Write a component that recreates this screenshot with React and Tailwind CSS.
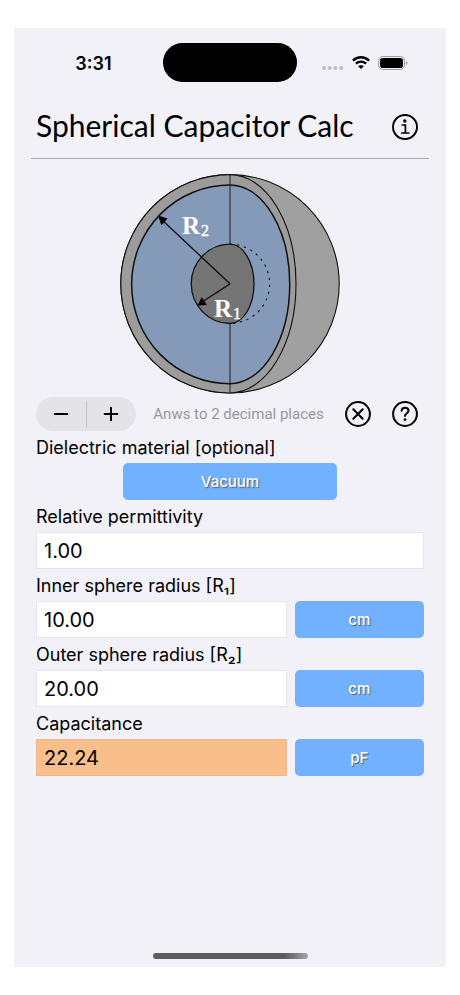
import { useState } from "react";

function StatusBar() {
  return (
    <div className="grid grid-cols-[1fr_134px_1fr] items-center pt-[15px]">
      <span className="pt-0.5 pl-2.5 text-center text-lg font-semibold leading-6">3:31</span>
      <div className="h-[39px] rounded-full bg-black" />
      <div className="flex items-center justify-center gap-2 pr-3.5">
        <svg className="mt-2.5 h-1 w-[22px]" viewBox="0 0 22 4" fill="#bfbec4">
          <circle cx="2" cy="2" r="2" />
          <circle cx="7.7" cy="2" r="2" />
          <circle cx="13.4" cy="2" r="2" />
          <circle cx="19.2" cy="2" r="2" />
        </svg>
        <svg className="h-[13px] w-[18px]" viewBox="0 0 18 13" fill="none" stroke="#000" strokeWidth="2.3">
          <path d="M0.9 4.6C5.4 0.1 12.6 0.1 17.1 4.6" />
          <path d="M3.9 7.7C6.8 4.9 11.2 4.9 14.1 7.7" />
          <path d="M9 13L6.2 10.2C7.8 8.8 10.2 8.8 11.8 10.2Z" fill="#000" stroke="none" />
        </svg>
        <svg className="h-3.5 w-[30px]" viewBox="0 0 30 14">
          <rect x="0.5" y="0.5" width="26" height="13" rx="4.2" fill="none" stroke="#9b9a9f" />
          <rect x="2" y="2" width="23" height="10" rx="2.8" />
          <path d="M28 4.8C29.8 5.5 29.8 8.5 28 9.2Z" fill="#9b9a9f" />
        </svg>
      </div>
    </div>
  );
}

function InfoIcon() {
  return (
    <svg className="size-[26px]" viewBox="0 0 26 26" fill="none" stroke="#000" strokeWidth="1.9">
      <circle cx="13" cy="13" r="12" />
      <circle cx="12.8" cy="7" r="1.7" fill="#000" stroke="none" />
      <path d="M10.3 11H13.4V18.9M9.8 19H16.8" strokeWidth="1.7" strokeLinecap="round" />
    </svg>
  );
}

function ClearIcon() {
  return (
    <svg className="size-[26px]" viewBox="0 0 26 26" fill="none" stroke="#000" strokeWidth="2" strokeLinecap="round">
      <circle cx="13" cy="13" r="11.9" />
      <path d="M8.3 8.3L17.7 17.7M17.7 8.3L8.3 17.7" />
    </svg>
  );
}

function HelpIcon() {
  return (
    <svg className="size-[26px]" viewBox="0 0 26 26" fill="none" stroke="#000" strokeWidth="2" strokeLinecap="round">
      <circle cx="13" cy="13" r="11.9" />
      <path d="M9.6 9.8C9.7 7.7 11.2 6.7 13.1 6.7C15.1 6.7 16.5 7.9 16.5 9.7C16.5 12.2 13 12.2 13 14.9" />
      <circle cx="13" cy="18.6" r="1.35" fill="#000" stroke="none" />
    </svg>
  );
}

function SphereDiagram() {
  return (
    <svg
      className="mx-auto mt-[15px] size-[220px]"
      viewBox="10 9 220 220"
      role="img"
      stroke="#111"
      strokeWidth="1.1"
      fontFamily='"Liberation Serif", serif'
    >
      <circle cx="120" cy="118.8" r="109.2" fill="#a0a0a0" />
      <path d="M120 9.6A109.2 109.2 0 0 0 120 228A66 109.2 0 0 0 120 9.6Z" fill="#9c9c9c" />
      <path d="M120 20A98.3 99.3 0 0 0 120 218.7A59.7 99.3 0 0 0 120 20Z" fill="#859ab8" strokeWidth="1.5" />
      <path d="M120 9.6V228" strokeWidth="0.9" />
      <path d="M120 79.2A39.6 39.6 0 0 1 120 158.5" fill="none" strokeDasharray="2.4 4.6" />
      <path d="M120 79.2A38.7 39.6 0 0 0 120 158.5C133 158.5 144 141 144 118.8C144 97 133 79.2 120 79.2Z" fill="#757575" strokeWidth="1.3" />
      <path d="M120 118.8L51 54M120 118.8L92 137" fill="none" strokeWidth="1.4" />
      <path d="M48 50.5L57.6 53.5L51.4 60.2Z" fill="#000" stroke="none" />
      <path d="M87.5 140.5L91.8 132L96.8 139.9Z" fill="#000" stroke="none" />
      <g fill="#fff" stroke="none">
        <text x="72" y="69" fontSize="25" fontWeight="700">R</text>
        <text x="91" y="71" fontSize="16" stroke="#fff" strokeWidth="0.4">2</text>
        <text x="104" y="152" fontSize="25" fontWeight="700">R</text>
        <text x="123" y="154" fontSize="16" stroke="#fff" strokeWidth="0.4">1</text>
      </g>
    </svg>
  );
}

function BlueButton({ children, className }) {
  return (
    <button
      className={`h-[37px] rounded-[5px] bg-[#72b1ff] pt-0.5 text-[15px] font-medium text-white [text-shadow:1px_1px_1px_#55606e] ${className}`}
    >
      {children}
    </button>
  );
}

function Field({ id, label, defaultValue, unit, result }) {
  return (
    <div>
      <label htmlFor={id} className="block h-8 pt-[3px] text-lg leading-7">
        {label}
      </label>
      <div className="flex gap-2">
        <input
          id={id}
          defaultValue={defaultValue}
          readOnly={result}
          className={`h-[37px] min-w-0 flex-1 border px-[7px] text-xl outline-none ${
            result ? "border-[#eab88e] bg-[#f8be8c]" : "border-[#e6e5eb] bg-white"
          }`}
        />
        {unit && <BlueButton className="w-1/3">{unit}</BlueButton>}
      </div>
    </div>
  );
}

export default function App() {
  const [places, setPlaces] = useState(2);

  return (
    <div className="flex min-h-screen flex-col bg-white px-3.5 py-7 font-['Inter',sans-serif] text-black">
      <main className="flex flex-1 flex-col bg-[#f2f1f7]">
        <StatusBar />

        <header className="mx-[17px] mt-[21px] flex h-14 items-center justify-between border-b border-[#a9a8ad] pr-[11px] pl-[5px] pb-2">
          <h1 className="pb-1 font-['Lato',sans-serif] text-[30px] leading-9">Spherical Capacitor Calc</h1>
          <button aria-label="Info">
            <InfoIcon />
          </button>
        </header>

        <SphereDiagram />

        <section className="px-[22px]">
          <div className="mt-[3px] flex items-center">
            <div className="flex h-[34px] w-[100px] items-center rounded-full bg-[#e4e3e8]">
              <button
                aria-label="Fewer decimal places"
                className="flex flex-1 justify-center"
                onClick={() => setPlaces(Math.max(0, places - 1))}
              >
                <svg className="size-4" viewBox="0 0 16 16" stroke="#000" strokeWidth="2" strokeLinecap="round">
                  <path d="M1.7 8H14.3" />
                </svg>
              </button>
              <div className="h-[26px] w-px bg-[#c3c2c8]" />
              <button
                aria-label="More decimal places"
                className="flex flex-1 justify-center"
                onClick={() => setPlaces(places + 1)}
              >
                <svg className="size-4" viewBox="0 0 16 16" stroke="#000" strokeWidth="2" strokeLinecap="round">
                  <path d="M1.7 8H14.3M8 1.7V14.3" />
                </svg>
              </button>
            </div>
            <span className="flex-1 pr-1 text-center font-['Roboto',sans-serif] text-[15px] text-[#98979c]">
              Anws to {places} decimal places
            </span>
            <div className="flex gap-[21px] pr-1.5">
              <button aria-label="Clear">
                <ClearIcon />
              </button>
              <button aria-label="Help">
                <HelpIcon />
              </button>
            </div>
          </div>

          <p className="h-8 pt-[3px] text-lg leading-7">Dielectric material [optional]</p>
          <div className="flex justify-center">
            <BlueButton className="w-[55%]">Vacuum</BlueButton>
          </div>
          <Field id="permittivity" label="Relative permittivity" defaultValue="1.00" />
          <Field id="inner" label="Inner sphere radius [R₁]" defaultValue="10.00" unit="cm" />
          <Field id="outer" label="Outer sphere radius [R₂]" defaultValue="20.00" unit="cm" />
          <Field id="capacitance" label="Capacitance" defaultValue="22.24" unit="pF" result />
        </section>

        <div className="mx-auto mt-auto mb-2 h-[6px] w-[155px] rounded-full bg-linear-to-r from-[#5d5c60] from-85% to-[#a5a4a9]" />
      </main>
    </div>
  );
}
